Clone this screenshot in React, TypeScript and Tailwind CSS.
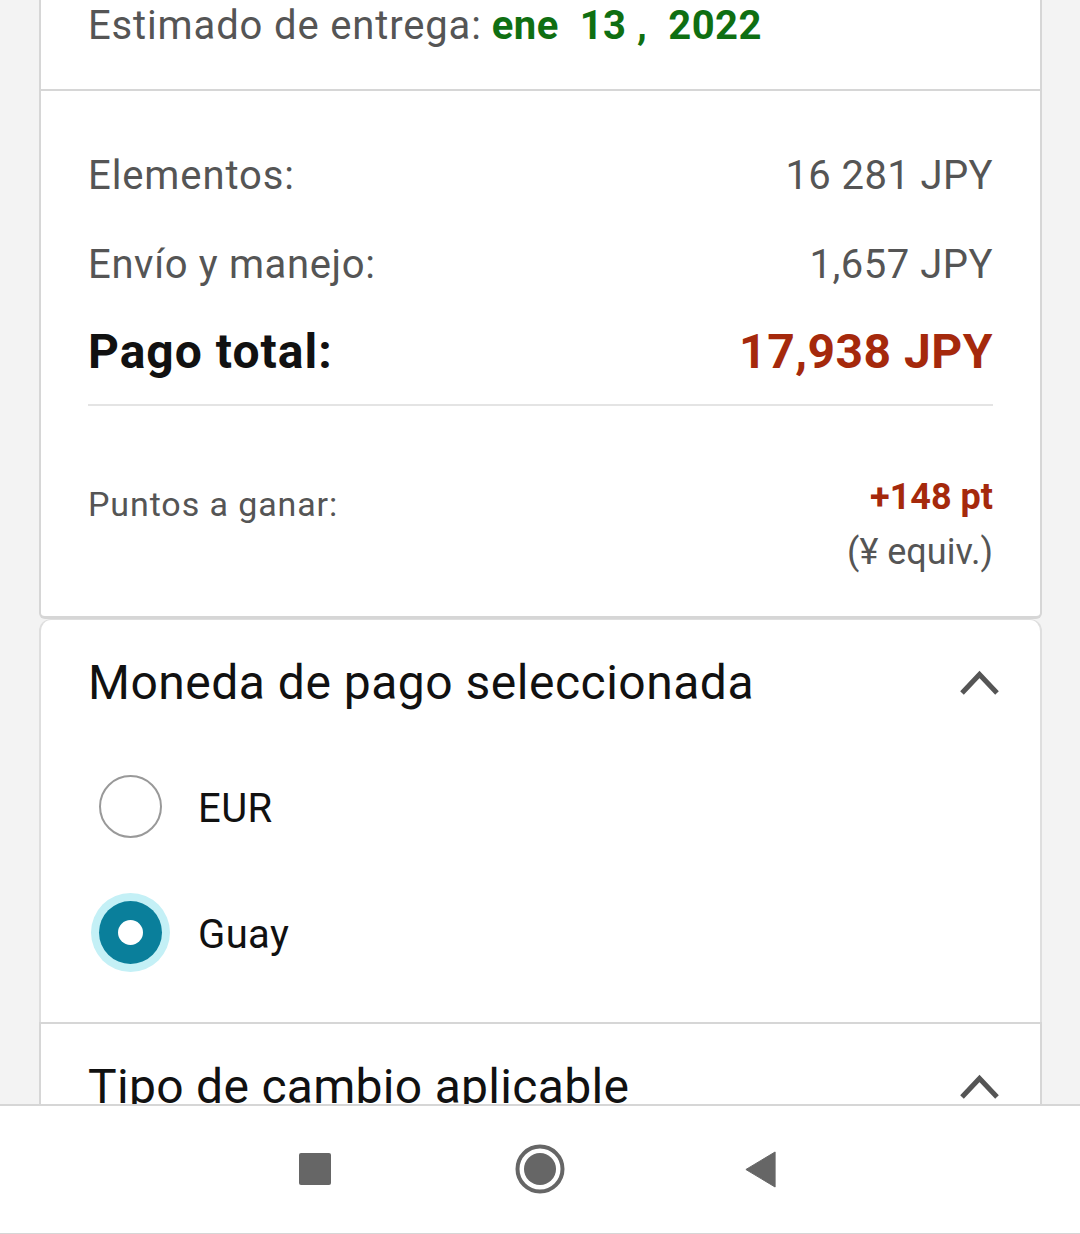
import React from 'react'

function Chevron() {
    return (
        <svg width="42" height="28" viewBox="0 0 42 28" fill="none" className="shrink-0">
            <path d="M3 24 L20.5 5.5 L38 24" stroke="#555555" strokeWidth="5" />
        </svg>
    )
}

function Radio({ label, selected }: { label: string; selected?: boolean }) {
    return (
        <div className="flex items-center h-[126px]">
            <div className="w-[84px] h-[84px] flex items-center justify-center rounded-full shrink-0">
                {selected ? (
                    <div className="w-[63px] h-[63px] rounded-full bg-[#0a7f9b] shadow-[0_0_0_8px_#c4f0f6] flex items-center justify-center">
                        <div className="w-[25px] h-[25px] rounded-full bg-white" />
                    </div>
                ) : (
                    <div className="w-[63px] h-[63px] rounded-full border-2 border-[#999999] bg-white" />
                )}
            </div>
            <span className="ml-[26px] pt-[6px] text-[40px] tracking-[0.4px] text-[#111111]">{label}</span>
        </div>
    )
}

export default function App() {
    return (
        <div className="w-[1080px] h-[1234px] flex flex-col overflow-hidden bg-[#f3f3f3] font-['Roboto',sans-serif]">
            <main className="flex-1 min-h-0 overflow-hidden pl-[39px] pr-[38px]">
                {/* Delivery estimate */}
                <section className="h-[91px] bg-white border-x-2 border-b-2 border-[#d6d6d6] px-[47px]">
                    <p className="text-[40px] leading-[52px] text-[#555555]">
                        <span className="tracking-[0.85px]">Estimado de entrega:</span> <span className="font-bold text-[#0f6f12] tracking-[0.5px] whitespace-pre">ene  13 ,  2022</span>
                    </p>
                </section>

                {/* Totals */}
                <section className="h-[528px] bg-white border-x-2 border-b-[3px] border-[#d6d6d6] rounded-b-md px-[47px] pt-[60px]">
                    <div className="flex justify-between items-center h-[50px] text-[40px] text-[#555555]">
                        <span className="tracking-[0.9px]">Elementos:</span>
                        <span className="tracking-[0.4px]">16 281 JPY</span>
                    </div>
                    <div className="flex justify-between items-center h-[50px] mt-[39px] text-[40px] text-[#555555]">
                        <span className="tracking-[0.65px]">Envío y manejo:</span>
                        <span className="tracking-[0.5px]">1,657 JPY</span>
                    </div>
                    <div className="flex justify-between items-center h-[60px] mt-[33px] pb-[2px] text-[48px] font-bold text-[#111111]">
                        <span className="tracking-[1px]">Pago total:</span>
                        <span className="tracking-[0.5px] text-[#a5290c]">17,938 JPY</span>
                    </div>
                    <div className="h-[2px] bg-[#e4e4e4] mt-[21px]" />
                    <div className="flex justify-between mt-[71px]">
                        <span className="text-[34px] leading-[54px] tracking-[0.9px] text-[#555555]">Puntos a ganar:</span>
                        <div className="text-right -mt-[2px]">
                            <div className="text-[36px] leading-[44px] font-bold text-[#a5290c]">+148 pt</div>
                            <div className="text-[36px] leading-[44px] mt-[11px] text-[#555555]">(¥ equiv.)</div>
                        </div>
                    </div>
                </section>

                {/* Payment currency */}
                <section className="h-[403px] bg-white border-x-2 border-t border-[#dedede] rounded-t-xl px-[47px] pt-[32px]">
                    <div className="flex justify-between items-center h-[64px]">
                        <h2 className="text-[48px] font-normal tracking-[0.5px] text-[#111111] -mt-[2px]">Moneda de pago seleccionada</h2>
                        <div className="-mr-[8px] -mt-[2px]"><Chevron /></div>
                    </div>
                    <div className="mt-[27px]">
                        <Radio label="EUR" />
                        <Radio label="Guay" selected />
                    </div>
                </section>

                {/* Exchange rate, cut off by the nav bar */}
                <section className="h-[200px] bg-white border-x-2 border-t-2 border-[#d6d6d6] px-[47px] pt-[32px]">
                    <div className="flex justify-between items-center h-[64px]">
                        <h2 className="text-[48px] font-normal tracking-[0.3px] text-[#111111] -mt-[2px]">Tipo de cambio aplicable</h2>
                        <div className="-mr-[8px] -mt-[2px]"><Chevron /></div>
                    </div>
                </section>
            </main>

            {/* Android nav bar */}
            <nav className="h-[130px] shrink-0 bg-white border-t-2 border-b border-[#d6d6d6] flex items-center justify-center pb-px pr-[5px]">
                <div className="w-[32px] h-[32px] rounded-[2px] bg-[#666666]" />
                <svg width="50" height="50" viewBox="0 0 50 50" className="ml-[184px]">
                    <circle cx="25" cy="25" r="22.5" fill="none" stroke="#666666" strokeWidth="4" />
                    <circle cx="25" cy="25" r="16" fill="#666666" />
                </svg>
                <svg width="33" height="37" viewBox="0 0 32 38" className="ml-[179px]">
                    <path d="M31 1 L31 37 L1 19 Z" fill="#666666" stroke="#666666" strokeWidth="1" strokeLinejoin="round" />
                </svg>
            </nav>
        </div>
    )
}
